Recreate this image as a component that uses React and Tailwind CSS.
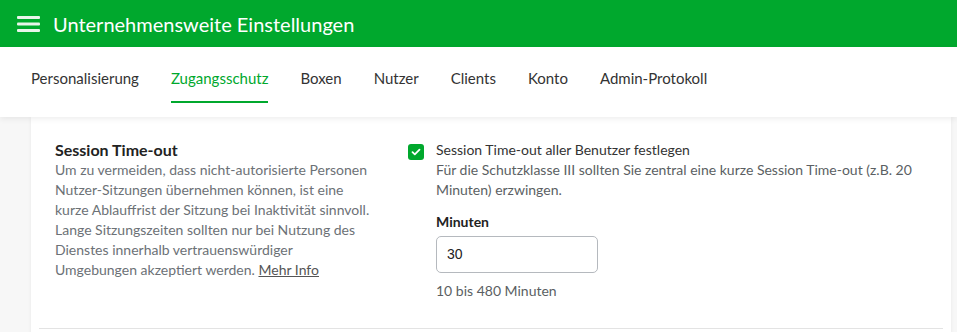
import React from "react";

export default function App() {
  const left = [
    "Um zu vermeiden, dass nicht-autorisierte Personen",
    "Nutzer-Sitzungen übernehmen können, ist eine",
    "kurze Ablauffrist der Sitzung bei Inaktivität sinnvoll.",
    "Lange Sitzungszeiten sollten nur bei Nutzung des",
    "Dienstes innerhalb vertrauenswürdiger",
  ];
  return (
    <div className="w-[957px] h-[332px] overflow-hidden bg-[#f7f7f7] font-['Lato','Noto_Sans',sans-serif]">
      <header className="h-[47px] bg-[#00a82d] flex items-center pl-[17px]">
        <svg width="23" height="16" viewBox="0 0 23 16" className="shrink-0">
          <rect x="0" y="0" width="23" height="3" rx="1" fill="#e8f5ea" />
          <rect x="0" y="6.5" width="23" height="3" rx="1" fill="#e8f5ea" />
          <rect x="0" y="13" width="23" height="3" rx="1" fill="#e8f5ea" />
        </svg>
        <h1 className="ml-[13px] text-white text-[20px] leading-none">Unternehmensweite Einstellungen</h1>
      </header>
      <nav className="relative z-10 h-[70px] bg-white shadow-[0_2px_6px_rgba(0,0,0,0.07)] flex items-stretch pl-[31px] gap-[32px] text-[15px] text-[#333]">
        {["Personalisierung", "Zugangsschutz", "Boxen", "Nutzer", "Clients", "Konto", "Admin-Protokoll"].map((t) => (
          <div key={t} className="relative flex items-center pb-[8px]">
            <span className={t === "Zugangsschutz" ? "text-[#00a82d]" : ""}>{t}</span>
            {t === "Zugangsschutz" && (
              <div className="absolute left-0 right-0 top-[54px] h-[2px] bg-[#00a82d]" />
            )}
          </div>
        ))}
      </nav>
      <div className="ml-[31px] w-[920px] bg-white shadow-[0_0_4px_rgba(0,0,0,0.06)] h-[300px]">
        <div className="flex pl-[24px] pt-[23px] pb-[27px]">
          <div className="w-[330px] shrink-0">
            <h2 className="text-[16px] font-bold text-[#222] leading-[20px]">Session Time-out</h2>
            <div className="text-[14px] leading-[20px] text-[#6c7176] whitespace-nowrap">
              {left.map((l) => (
                <div key={l}>{l}</div>
              ))}
              <div>
                Umgebungen akzeptiert werden. <a className="underline text-[#555]">Mehr Info</a>
              </div>
            </div>
          </div>
          <div className="ml-[23px] flex items-start gap-[12px]">
            <div className="mt-[4px] w-[16px] h-[16px] rounded-[3px] bg-[#00a82d] flex items-center justify-center shrink-0">
              <svg width="10" height="8" viewBox="0 0 10 8">
                <path d="M1.5 4.2 L3.8 6.3 L8.5 1.7" stroke="white" strokeWidth="1.8" fill="none" strokeLinecap="round" strokeLinejoin="round" />
              </svg>
            </div>
            <div className="w-[480px]">
              <div className="text-[14px] leading-[20px] text-[#333]">Session Time-out aller Benutzer festlegen</div>
              <div className="text-[14px] leading-[20px] text-[#5b5f63] whitespace-nowrap">
                <div>Für die Schutzklasse III sollten Sie zentral eine kurze Session Time-out (z.B. 20</div>
                <div>Minuten) erzwingen.</div>
              </div>
              <div className="mt-[12px] text-[14px] font-bold text-[#222] leading-[20px]">Minuten</div>
              <div className="mt-[4px] w-[162px] h-[37px] border border-[#b5b9be] rounded-[5px] flex items-center pl-[10px] text-[14px] text-[#222] font-['Liberation_Sans',Arial,sans-serif]">
                30
              </div>
              <div className="mt-[8px] text-[14px] leading-[20px] text-[#5b5f63]">10 bis 480 Minuten</div>
            </div>
          </div>
        </div>
        <div className="mx-[8px] h-px bg-[#e3e3e3]" />
      </div>
    </div>
  );
}
